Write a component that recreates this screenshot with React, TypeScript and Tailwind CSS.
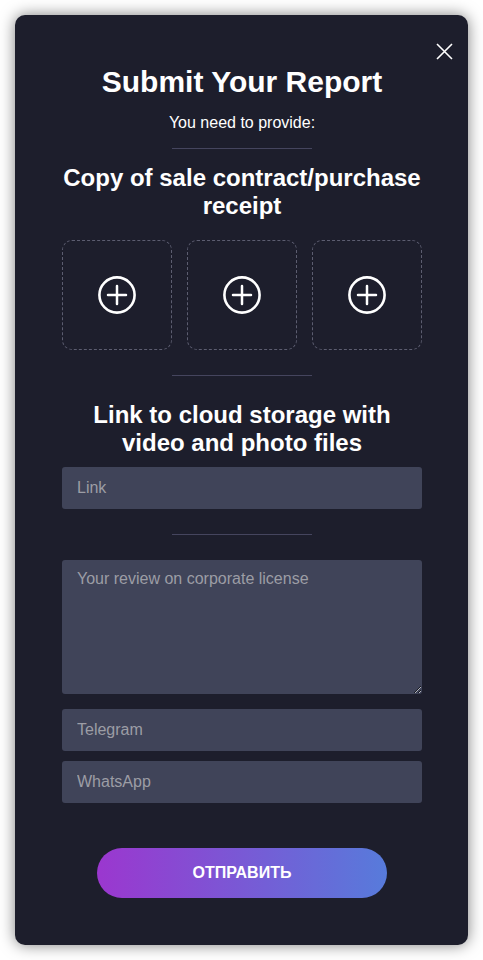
const FIELD =
  'block w-full rounded-[3px] bg-[#404459] px-[15px] text-base leading-6 text-white placeholder:text-[#9c9da5] focus:outline-none';

function Divider() {
  return <hr className="mx-auto w-[140px] border-t border-[#45455e]" />;
}

function UploadTile({ index }: { index: number }) {
  return (
    <label className="flex h-[110px] flex-1 cursor-pointer items-center justify-center rounded-[10px] border border-dashed border-[#5c5d70]">
      <input type="file" className="sr-only" aria-label={`Document ${index}`} />
      <svg width="38" height="38" viewBox="0 0 38 38" fill="none" stroke="#fff" strokeLinecap="round" aria-hidden="true">
        <circle cx="19" cy="19" r="17.6" strokeWidth="2.6" />
        <path d="M19 10v18M10 19h18" strokeWidth="2.5" />
      </svg>
    </label>
  );
}

export default function App() {
  return (
    <main className="min-h-screen bg-white p-[15px] font-['Liberation_Sans',Arial,sans-serif] text-white">
      <section
        role="dialog"
        aria-labelledby="report-title"
        className="flex flex-col rounded-[10px] bg-[#1d1e2c] pt-7 pb-[47px] shadow-[0_0_15px_rgba(0,0,0,0.5)]"
      >
        <button type="button" aria-label="Close" className="mr-[15px] flex size-[17px] cursor-pointer self-end">
          <svg width="17" height="17" viewBox="0 0 17 17" stroke="#fff" strokeWidth="1.6" aria-hidden="true">
            <path d="M1 1l15 15M16 1L1 16" />
          </svg>
        </button>

        <form className="flex flex-col pt-1 pr-[46px] pl-[47px]">
          <h1 id="report-title" className="text-center text-[30px] leading-9 font-bold">
            Submit Your Report
          </h1>
          <p className="mt-[11px] mb-[13px] text-center text-base leading-6">You need to provide:</p>
          <Divider />

          <h2 className="mt-[15px] mb-5 text-center text-2xl leading-7 font-bold">
            Copy of sale contract/purchase receipt
          </h2>
          <div className="mb-[25px] flex gap-[15px]">
            <UploadTile index={1} />
            <UploadTile index={2} />
            <UploadTile index={3} />
          </div>
          <Divider />

          <h2 className="mt-[25px] mb-[10px] px-5 text-center text-2xl leading-7 font-bold">
            Link to cloud storage with video and photo files
          </h2>
          <input type="url" aria-label="Link" placeholder="Link" className={`${FIELD} mb-[25px] h-[42px]`} />
          <Divider />

          <textarea
            aria-label="Your review on corporate license"
            placeholder="Your review on corporate license"
            className={`${FIELD} mt-[25px] mb-[15px] h-[134px] resize py-[7px]`}
          />
          <input type="text" aria-label="Telegram" placeholder="Telegram" className={`${FIELD} mb-[10px] h-[42px]`} />
          <input type="text" aria-label="WhatsApp" placeholder="WhatsApp" className={`${FIELD} h-[42px]`} />

          <button
            type="submit"
            className="mx-auto mt-[45px] h-[50px] w-[290px] cursor-pointer rounded-full bg-[linear-gradient(90deg,#9b37cf,#577bdb)] text-base font-bold"
          >
            ОТПРАВИТЬ
          </button>
        </form>
      </section>
    </main>
  );
}
